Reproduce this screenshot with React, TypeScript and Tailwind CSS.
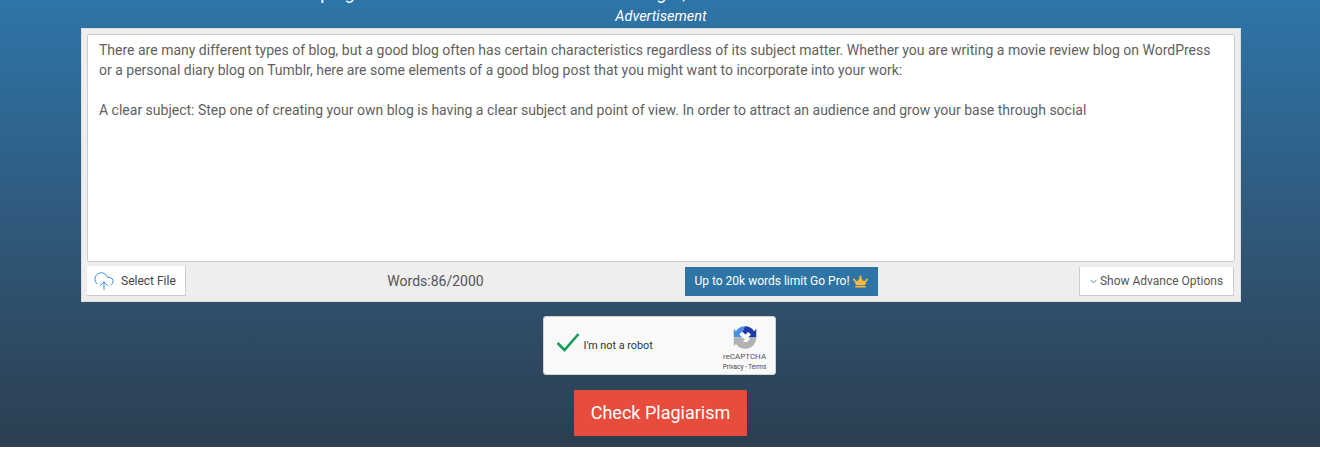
import { ChevronDown, CloudUpload } from "lucide-react";
import { FaCrown } from "react-icons/fa";

function RecaptchaLogo() {
  return (
    <svg viewBox="0 0 32 32" className="w-[24px] h-[25px]">
      {/* grey bottom */}
      <path d="M31 16 C31 25 24 31 16 31 C11 31 6.5 28.5 4 24.5 L1 27.5 L1 16 Z" fill="#b2b2b2" />
      {/* light blue top-left */}
      <path d="M16 1 C11 1 6.5 3.5 4 7.5 L1 4.5 L1 15.5 L12 15.5 L8.5 12 C10 9.5 12.5 8 15 8 Z" fill="#4a90e2" />
      {/* dark blue top-right */}
      <path d="M16 1 C21 1 25.5 3.5 28 7.5 L31 4.5 L31 15.5 L20.5 15.5 L24 12 C23 10.5 21.5 9.5 20 8.5 L16.5 12 L13 8.5 Z" fill="#1c3aa9" />
      {/* white notch in the middle */}
      <path d="M12 15.5 L20.5 15.5 L22.5 18 L19 22 L13 22 L16 18.5 Z" fill="#f9f9f9" />
    </svg>
  );
}

export default function App() {
  return (
    <div className="min-h-[464px] bg-white font-['Roboto',sans-serif]">
      <div className="h-[447px] overflow-hidden flex flex-col items-center bg-linear-to-b from-[#2d75a9] to-[#2c3e50]">
        {/* Intro line, cut off by the top of the window */}
        <p className="mt-[-20px] h-[25px] leading-[25px] text-[18px] text-white whitespace-nowrap text-center">
          Enter the text in the box to check plagiarism in the content and the source right, and then read the full list of the results that are shown in the table below
        </p>
        <p className="ml-[2px] h-[23px] leading-[24px] text-[14.5px] italic text-white">Advertisement</p>

        {/* Checker box */}
        <div className="ml-[2px] w-[1160px] h-[274px] bg-[#eeeeee] border border-[#dddddd] p-[5px] flex flex-col">
          <div className="h-[228px] bg-white border border-[#cccccc] rounded-[2px] pl-[11px] pr-[12px] py-[5px] text-[14px] leading-[20px] text-[#5f5f5f]">
            <p>
              There are many different types of blog, but a good blog often has certain characteristics regardless of its subject matter. Whether you are writing a movie review blog on WordPress or a personal diary blog on Tumblr, here are some elements of a good blog post that you might want to incorporate into your work:
            </p>
            <p className="mt-[20px]">
              A clear subject: Step one of creating your own blog is having a clear subject and point of view. In order to attract an audience and grow your base through social
            </p>
          </div>

          <div className="mt-[4px] flex items-start">
            <button className="w-[99px] h-[30px] bg-white border-r border-b border-[#cccccc] flex items-center text-[12px] text-[#444444]">
              <CloudUpload className="ml-[6px] w-[22px] h-[22px] text-[#2b88d8]" strokeWidth={1} />
              <span className="ml-[6px]">Select File</span>
            </button>
            <div className="flex-1 h-[30px] leading-[30px] text-center text-[14px] text-[#555555]">Words:86/2000</div>
            <button className="w-[193px] h-[29px] mt-[1px] pr-[1px] pb-[1px] bg-[#2e75a6] flex items-center justify-center gap-[3px] text-[12px] text-white">
              Up to 20k words limit Go Pro!
              <FaCrown className="w-[15px] h-[15px] text-[#f6b93b]" />
            </button>
            <button className="ml-[201px] mr-[1px] w-[155px] h-[29px] mt-[1px] pr-[2px] bg-white border-r border-b border-l border-[#cccccc] flex items-center justify-center gap-[1px] text-[12px] text-[#555555]">
              <ChevronDown className="w-[11px] h-[11px] text-[#4a6785]" strokeWidth={1.75} />
              Show Advance Options
            </button>
          </div>
        </div>

        {/* Captcha widget */}
        <div className="mt-[14px] mr-[2px] w-[233px] h-[59px] bg-[#f9f9f9] border border-[#d3d3d3] rounded-[3px] flex">
          <svg viewBox="0 0 24 20" className="ml-[12px] mt-[15px] w-[24px] h-[20px]">
            <path d="M1.5 11 L8.5 18 L22.5 2" fill="none" stroke="#0f9d58" strokeWidth="2.6" />
          </svg>
          <span className="ml-[4px] mt-[21px] text-[10.8px] leading-[16px] text-[#333333]">I'm not a robot</span>
          <div className="ml-auto mr-[7px] mt-[8px] w-[46px] flex flex-col items-center">
            <RecaptchaLogo />
            <span className="mt-[2px] text-[8px] leading-[10px] text-[#555555]">reCAPTCHA</span>
            <span className="mt-[1px] text-[6.4px] leading-[8px] text-[#444444] whitespace-nowrap">Privacy - Terms</span>
          </div>
        </div>

        <button className="mt-[15px] w-[173px] h-[46px] pb-[2px] pl-[1px] bg-[#e74c3c] border border-[#dd4b39] text-[18px] text-white">
          Check Plagiarism
        </button>
      </div>
    </div>
  );
}
